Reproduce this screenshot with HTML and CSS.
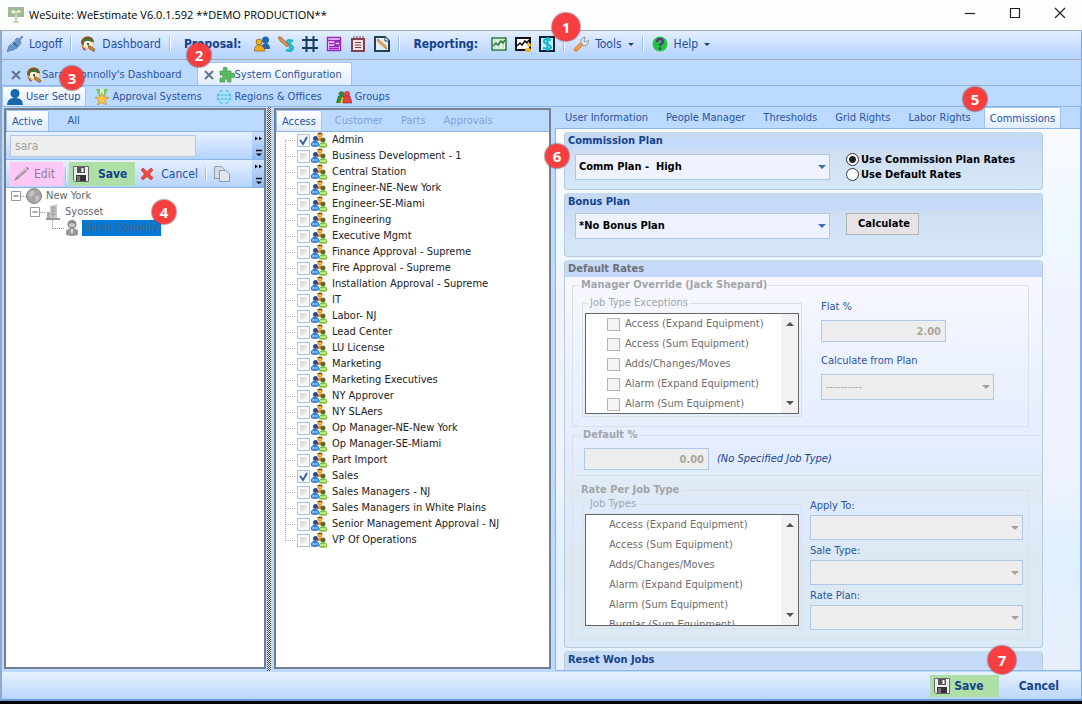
FILE: index.html
```html
<!DOCTYPE html>
<html lang="en">
<head>
  <meta charset="UTF-8">
  <title>WeSuite: WeEstimate V6.0.1.592</title>
  <link rel="stylesheet" href="styles.css">
</head>
<body>

<svg class="sprite" aria-hidden="true">
  <symbol id="people" viewBox="0 0 16 16">
    <circle cx="9" cy="3" r="2.6" fill="#f0a03c"/><path d="M6.3 2.6C6.5 0 11.500 0 11.700 2.600L9 1.600z" fill="#3b2b1d"/>
    <path d="M6 9V7q3-3 6 0v2z" fill="#f08a1c"/>
    <circle cx="4.500" cy="6.500" r="2.500" fill="#2b4f8c"/><path d="M0 14v-3q4-4.500 8 0v3q-4 2-8 0z" fill="#2f7fd0"/><path d="M1 12h6" stroke="#8cc4f4" stroke-width="1.500"/>
    <circle cx="12" cy="8" r="2.500" fill="#55702a"/><path d="M8 15v-3q4-4 8 0v3q-4 2-8 0z" fill="#86c440"/><path d="M9 13h6" stroke="#d3f09a" stroke-width="1.500"/>
  </symbol>
  <symbol id="floppy" viewBox="0 0 16 16">
    <path d="M.5.5h15v15H2L.5 14z" fill="#eee" stroke="#666"/><path d="M4 1h8v6H4z" fill="#555"/><path d="M8.500 2h2v4h-2z" fill="#fff"/>
    <path d="M3 9h10v6H3z" fill="#333"/><path d="M4 10h3v5H4z" fill="#777"/>
  </symbol>
  <symbol id="dash" viewBox="0 0 16 16">
    <circle cx="7.500" cy="7" r="6.500" fill="#e9c27a"/><path d="M1 7C1 2 5 .5 8 .5s6 2 6 6l-3-1.500-6 0-2 5z" fill="#8a5420"/>
    <path d="M4 6q4-3 9 1l-1 4-5 1-3-2z" fill="#fff1d6"/><path d="M4 4q4-4 9 1l-1 1.500Q8 3 4 6z" fill="#2d7a3f"/>
    <circle cx="8" cy="8" r="1" fill="#222"/><path d="M8 9.500l3 1 4 3-1 2-5-3z" fill="#c98c3c" stroke="#6d4416" stroke-width=".7"/><path d="M1 9l5 5-2 .5z" fill="#a33"/>
  </symbol>
  <symbol id="sheet" viewBox="0 0 16 16">
    <path d="M1 1h10l4 4v10H1z" fill="#dfeef8" stroke="#24404e" stroke-width="2"/><path d="M11 1v4h4" fill="#fff" stroke="#24404e"/>
  </symbol>
  <symbol id="expander" viewBox="0 0 10 10"><path d="M.5.500h9v9h-9z" fill="#fff" stroke="#999"/><path d="M2.500 5h5" stroke="#555"/></symbol>
  <symbol id="overflow" viewBox="0 0 12 26">
    <path d="M3 4l3 2-3 2zM7 4l3 2-3 2z" fill="#111"/><path d="M4 18h6" stroke="#111" stroke-width="1.500"/><path d="M4 21h6l-3 3z" fill="#111"/><path d="M5 25l3-2" stroke="#fff" stroke-width=".5"/>
  </symbol>
</svg>

<header class="titlebar">
  <svg class="icon" viewBox="0 0 16 16"><path d="M0 0h16v10H0z" fill="#a3b894"/><path d="M3 5q2-4 5 0 3-4 5 0-3 2-5 0-3 3-5 0z" fill="#edf3da"/><path d="M8 4v12M5 15.500h6" stroke="#c5cfb4" stroke-width="2"/></svg>
  <h1>WeSuite: WeEstimate V6.0.1.592 **DEMO PRODUCTION**</h1>
  <div class="window-buttons">
    <button type="button" aria-label="Minimize"><svg viewBox="0 0 12 12"><path d="M1 6.500h10"/></svg></button>
    <button type="button" aria-label="Maximize"><svg viewBox="0 0 12 12"><path d="M1.500 1.500h9v9h-9z"/></svg></button>
    <button type="button" aria-label="Close"><svg viewBox="0 0 12 12"><path d="M1 1l10 10M11 1L1 11"/></svg></button>
  </div>
</header>

<div class="window">
  <nav class="toolbar">
    <button type="button" class="tool"><svg class="icon" viewBox="0 0 16 16"><path d="M0 16l2-6 4-4 4-4 2 1 3-3 1 1-3 3 1 3-4 5-4 2-4 1z" fill="#6b97cc" stroke="#3c6aa5" stroke-width=".6"/><path d="M6 6l4 4" stroke="#24538f" stroke-width="1.200"/><path d="M4 9l4-5" stroke="#bcd6f2"/></svg>Logoff</button>
    <span class="sep"></span>
    <button type="button" class="tool"><svg class="icon"><use href="#dash"/></svg>Dashboard</button>
    <span class="sep"></span>
    <strong class="tool-title">Proposal:</strong>
    <div class="tool-icons">
      <button type="button" aria-label="Customers"><svg class="icon" viewBox="0 0 16 16"><circle cx="11.500" cy="4" r="3.500" fill="#2a66ad"/><path d="M7 13c0-7 9-8 9 0z" fill="#2a66ad"/><circle cx="5" cy="6" r="3" fill="#f2ac16" stroke="#6d5013" stroke-width=".6"/><path d="M0 15q.5-6 5-6t6 6z" fill="#f2ac16" stroke="#6d5013" stroke-width=".6"/></svg></button>
      <button type="button" aria-label="Pricing"><svg class="icon" viewBox="0 0 16 16"><path d="M15 5q-6-2-6 1 0 2 3 3t3 3q-1 4-7 2M12 3v13" fill="none" stroke="#26b9c6" stroke-width="2.500"/><path d="M0 1l3 0 8 8-2 2-7-6z" fill="#d78a52" stroke="#98552d" stroke-width=".6"/></svg></button>
      <button type="button" aria-label="Grid"><svg class="icon" viewBox="0 0 16 16"><path d="M4.500 0v16M11.500 0v16M0 4h16M0 12h16" stroke="#173c5c" stroke-width="2"/></svg></button>
      <button type="button" aria-label="Form"><svg class="icon" viewBox="0 0 16 16"><path d="M1.500 1.500h13v13h-13zM1.500 4.500h13M3 7.500h5M3 10.500h10M3 12.500h10M9 6h5v3H9z" fill="#f1d9fa" stroke="#9a27bd" stroke-width="1.400"/></svg></button>
      <button type="button" aria-label="Notes"><svg class="icon" viewBox="0 0 16 16"><path d="M2 3h12v12H2z" fill="#f6dfe4" stroke="#83424f" stroke-width="2"/><path d="M4 0v4M7 0v4M10 0v4M13 0v4" stroke="#83424f"/><path d="M5 6.500h6M5 9h6M5 11.500h6" stroke="#83424f"/></svg></button>
      <button type="button" aria-label="Edit document"><svg class="icon" viewBox="0 0 16 16"><use href="#sheet"/><path d="M3 5l8 7 2 1-1-3-8-7z" fill="#f0a64c" stroke="#965d20" stroke-width=".5"/></svg></button>
    </div>
    <span class="sep"></span>
    <strong class="tool-title">Reporting:</strong>
    <div class="tool-icons">
      <button type="button" aria-label="Chart"><svg class="icon" viewBox="0 0 16 16"><path d="M1 2h14v12H1z" fill="#e3f6e4" stroke="#2b7a41" stroke-width="1.500"/><path d="M4 2v12M8 2v12M12 2v12" fill="none" stroke="#9ccba4" stroke-width=".8"/><path d="M2 10l3-3 2 2 3-4 2 2 2-3" fill="none" stroke="#2b7a41" stroke-width="1.500"/></svg></button>
      <button type="button" aria-label="Sales chart"><svg class="icon" viewBox="0 0 16 16"><path d="M1 2h14v12H1z" fill="#fff" stroke="#111" stroke-width="2"/><path d="M2 10l3-3 2 2 3-4 2 2 2-3" fill="none" stroke="#111" stroke-width="1.500"/><circle cx="14" cy="9" r="2" fill="#f3b527"/><ellipse cx="13" cy="14" rx="3" ry="2" fill="#f3b527"/></svg></button>
      <button type="button" aria-label="Commission report"><svg class="icon" viewBox="0 0 16 16"><path d="M0 0h16v16H0z" fill="#123"/><path d="M2 2h12v12H2z" fill="#bdf4fb"/><path d="M12 4q-7-2-7 1 0 2 3 3t4 3q0 3-8 1M8.500 1v14" fill="none" stroke="#14b4cf" stroke-width="2"/></svg></button>
    </div>
    <span class="sep"></span>
    <button type="button" class="tool"><svg class="icon" viewBox="0 0 16 16"><path d="M1 13l6-6 3 2-6 6q-3 1-3-2z" fill="#f39a45" stroke="#c56a20" stroke-width=".6"/><path d="M8 7q-1-5 4-6l-1 4 2 1 3-2q0 5-5 6z" fill="#dfe4ea" stroke="#7d8791" stroke-width=".8"/></svg>Tools<span class="caret"></span></button>
    <span class="sep"></span>
    <button type="button" class="tool"><svg class="icon" viewBox="0 0 16 16"><circle cx="8" cy="8" r="7.500" fill="#20c63a"/><path d="M5 6q0-3 3-3t3 3q0 1-2 2-1 1-1 2" fill="none" stroke="#74239c" stroke-width="2.200"/><circle cx="8" cy="12.500" r="1.300" fill="#74239c"/></svg>Help<span class="caret"></span></button>
  </nav>

  <nav class="tabs doc-tabs">
    <a href="#dashboard"><svg class="close" viewBox="0 0 10 10"><path d="M1 1l8 8M9 1L1 9"/></svg><svg class="icon"><use href="#dash"/></svg>Sarah Connolly's Dashboard</a>
    <a href="#config" class="active"><svg class="close" viewBox="0 0 10 10"><path d="M1 1l8 8M9 1L1 9"/></svg><svg class="icon" viewBox="0 0 16 16"><path d="M1 4h4q-2-4 1-4t2 4h4v3q4-2 4 1.500T12 10v5H8.500q1-3-1.500-3t-1 3H1v-4q3 1 3-1.500T1 8z" fill="#5cba5c" stroke="#3c9446" stroke-width=".7"/></svg>System Configuration</a>
  </nav>

  <nav class="tabs sub-tabs">
    <a href="#users" class="active"><svg class="icon" viewBox="0 0 16 16"><circle cx="8" cy="4.500" r="4.500" fill="#1667ad"/><path d="M0 16q0-6 6-7h4q6 1 6 7z" fill="#1667ad"/></svg>User Setup</a>
    <a href="#approvals"><svg class="icon" viewBox="0 0 16 16"><path d="M2 0h12l-3 7H5z" fill="#7cc46a"/><path d="M6 0h4v6H6z" fill="#d9efc8"/><path d="M8 4l2 4 5 .5-4 3 1.500 4.500L8 13.500 3.500 16 5 11.500l-4-3L6 8z" fill="#f9c64a" stroke="#c98a1c" stroke-width=".7"/></svg>Approval Systems</a>
    <a href="#regions"><svg class="icon" viewBox="0 0 16 16"><circle cx="8" cy="8" r="7.500" fill="#5fc3ea"/><path d="M8 0v16M1 8h14M2 4h12M2 12h12M8 .5q-8 7.500 0 15 8-7.500 0-15z" fill="none" stroke="#d8f3fd" stroke-width=".9"/></svg>Regions &amp; Offices</a>
    <a href="#groups"><svg class="icon" viewBox="0 0 16 16"><circle cx="5.500" cy="5" r="2.800" fill="#2d8a3c"/><path d="M0 14l2-7h6l1 7z" fill="#2d8a3c"/><path d="M4 14l2-6h3v6z" fill="#f0c02c"/><circle cx="11" cy="5" r="3" fill="#dc4545"/><path d="M7 14l1-7h6l2 7z" fill="#dc4545" stroke="#8e2525" stroke-width=".6"/></svg>Groups</a>
  </nav>

  <main class="panels">
    <section class="panel users">
      <nav class="tabs"><a href="#active" class="active">Active</a><a href="#all">All</a></nav>
      <div class="bar">
        <input type="text" class="search" aria-label="Search users" value="sara" disabled>
        <svg class="overflow"><use href="#overflow"/></svg>
      </div>
      <div class="bar">
        <button type="button" class="act edit" disabled><svg class="icon" viewBox="0 0 16 16"><path d="M0 15l2-4 9-8 2 2-9 8z" fill="#9b8f9b"/><path d="M12 2l1-1 2 2-1 1z" fill="#7d747d"/><path d="M4 11l7-7" stroke="#cfc3cf"/></svg>Edit</button>
        <span class="sep"></span>
        <button type="button" class="act save"><svg class="icon"><use href="#floppy"/></svg>Save</button>
        <button type="button" class="act"><svg class="cross" viewBox="0 0 14 14"><path d="M1 3l2-2 4 3.500L11 1l2 2-3.500 4L13 11l-2 2-4-3.500L3 13l-2-2 3.500-4z" fill="#ee4b40" stroke="#c32d25" stroke-width=".6"/></svg>Cancel</button>
        <span class="sep"></span>
        <button type="button" class="act" aria-label="Copy"><svg class="icon" viewBox="0 0 16 16"><path d="M.5.500h7l3 3v9H.5z" fill="#d3dbe4" stroke="#8e9baa"/><path d="M5.500 4.500h6l4 3v8h-10z" fill="#dfe5ec" stroke="#8e9baa"/></svg></button>
        <svg class="overflow"><use href="#overflow"/></svg>
      </div>
      <ul class="tree">
        <li><svg class="expander"><use href="#expander"/></svg><i class="dots"></i><svg class="icon" viewBox="0 0 16 16"><circle cx="8" cy="8" r="7.500" fill="#a5a5a5" stroke="#888"/><path d="M3 5q4-4 6-1l-2 4-3 1zM9 9l4-2v4l-3 3z" fill="#c4c4c4"/></svg><span>New York</span></li>
        <li class="level-2"><svg class="expander"><use href="#expander"/></svg><i class="dots"></i><svg class="icon" viewBox="0 0 16 16"><path d="M5 2l7-2v14H5z" fill="#c9c9c9"/><path d="M6 4h5M6 7h5M6 10h5M8 2v12" stroke="#999"/><path d="M1 14h14v2H1z" fill="#999"/><path d="M2 8h3v6H2z" fill="#aaa"/></svg><span>Syosset</span></li>
        <li class="level-3"><i class="dots elbow"></i><svg class="icon" viewBox="0 0 16 16"><circle cx="8" cy="4.500" r="4.500" fill="#888"/><path d="M5 4q3-2 6 0v3H5z" fill="#c4c4c4"/><path d="M2 15V10q6-3 12 0v5q-6 2-12 0z" fill="#999"/><path d="M7 9h2v4H7z" fill="#e0e0e0"/></svg><span class="selected">Sarah Connolly</span></li>
      </ul>
    </section>

    <div class="splitter"></div>

    <section class="panel access">
      <nav class="tabs"><a href="#access" class="active">Access</a><a class="off">Customer</a><a class="off">Parts</a><a class="off">Approvals</a></nav>
      <ul class="checks">
        <li><label><input type="checkbox" checked><svg class="icon"><use href="#people"/></svg>Admin</label></li>
        <li><label><input type="checkbox"><svg class="icon"><use href="#people"/></svg>Business Development - 1</label></li>
        <li><label><input type="checkbox"><svg class="icon"><use href="#people"/></svg>Central Station</label></li>
        <li><label><input type="checkbox"><svg class="icon"><use href="#people"/></svg>Engineer-NE-New York</label></li>
        <li><label><input type="checkbox"><svg class="icon"><use href="#people"/></svg>Engineer-SE-Miami</label></li>
        <li><label><input type="checkbox"><svg class="icon"><use href="#people"/></svg>Engineering</label></li>
        <li><label><input type="checkbox"><svg class="icon"><use href="#people"/></svg>Executive Mgmt</label></li>
        <li><label><input type="checkbox"><svg class="icon"><use href="#people"/></svg>Finance Approval - Supreme</label></li>
        <li><label><input type="checkbox"><svg class="icon"><use href="#people"/></svg>Fire Approval - Supreme</label></li>
        <li><label><input type="checkbox"><svg class="icon"><use href="#people"/></svg>Installation Approval - Supreme</label></li>
        <li><label><input type="checkbox"><svg class="icon"><use href="#people"/></svg>IT</label></li>
        <li><label><input type="checkbox"><svg class="icon"><use href="#people"/></svg>Labor- NJ</label></li>
        <li><label><input type="checkbox"><svg class="icon"><use href="#people"/></svg>Lead Center</label></li>
        <li><label><input type="checkbox"><svg class="icon"><use href="#people"/></svg>LU License</label></li>
        <li><label><input type="checkbox"><svg class="icon"><use href="#people"/></svg>Marketing</label></li>
        <li><label><input type="checkbox"><svg class="icon"><use href="#people"/></svg>Marketing Executives</label></li>
        <li><label><input type="checkbox"><svg class="icon"><use href="#people"/></svg>NY Approver</label></li>
        <li><label><input type="checkbox"><svg class="icon"><use href="#people"/></svg>NY SLAers</label></li>
        <li><label><input type="checkbox"><svg class="icon"><use href="#people"/></svg>Op Manager-NE-New York</label></li>
        <li><label><input type="checkbox"><svg class="icon"><use href="#people"/></svg>Op Manager-SE-Miami</label></li>
        <li><label><input type="checkbox"><svg class="icon"><use href="#people"/></svg>Part Import</label></li>
        <li><label><input type="checkbox" checked><svg class="icon"><use href="#people"/></svg>Sales</label></li>
        <li><label><input type="checkbox"><svg class="icon"><use href="#people"/></svg>Sales Managers - NJ</label></li>
        <li><label><input type="checkbox"><svg class="icon"><use href="#people"/></svg>Sales Managers in White Plains</label></li>
        <li><label><input type="checkbox"><svg class="icon"><use href="#people"/></svg>Senior Management Approval - NJ</label></li>
        <li><label><input type="checkbox"><svg class="icon"><use href="#people"/></svg>VP Of Operations</label></li>
      </ul>
    </section>

    <section class="details">
      <nav class="tabs"><a href="#info">User Information</a><a href="#people-manager">People Manager</a><a href="#thresholds">Thresholds</a><a href="#grid">Grid Rights</a><a href="#labor">Labor Rights</a><a href="#commissions" class="active">Commissions</a></nav>
      <div class="content">
        <section class="group plan">
          <h2>Commission Plan</h2>
          <div class="group-row">
            <select class="wide" aria-label="Commission Plan"><option>Comm Plan -&nbsp; High</option></select>
            <div class="radios">
              <label><input type="radio" name="rates" checked>Use Commission Plan Rates</label>
              <label><input type="radio" name="rates">Use Default Rates</label>
            </div>
          </div>
        </section>

        <section class="group bonus">
          <h2>Bonus Plan</h2>
          <div class="group-row">
            <select class="wide" aria-label="Bonus Plan"><option>*No Bonus Plan</option></select>
            <button type="button" class="calculate">Calculate</button>
          </div>
        </section>

        <section class="group rates">
          <h2>Default Rates</h2>
          <fieldset class="box">
            <legend>Manager Override (Jack Shepard)</legend>
            <div class="columns">
              <fieldset class="inner">
                <legend>Job Type Exceptions</legend>
                <div class="listbox">
                  <ul>
                    <li><label><input type="checkbox" disabled>Access (Expand Equipment)</label></li>
                    <li><label><input type="checkbox" disabled>Access (Sum Equipment)</label></li>
                    <li><label><input type="checkbox" disabled>Adds/Changes/Moves</label></li>
                    <li><label><input type="checkbox" disabled>Alarm (Expand Equipment)</label></li>
                    <li><label><input type="checkbox" disabled>Alarm (Sum Equipment)</label></li>
                  </ul>
                  <div class="scroll"><span class="up"></span><span class="down"></span></div>
                </div>
              </fieldset>
              <div class="override">
                <label for="flat">Flat %</label>
                <input type="text" id="flat" class="number" value="2.00" disabled>
                <label for="from-plan">Calculate from Plan</label>
                <select id="from-plan" disabled><option>----------</option></select>
              </div>
            </div>
          </fieldset>

          <fieldset class="box default">
            <legend>Default %</legend>
            <div class="columns">
              <input type="text" class="number" aria-label="Default %" value="0.00" disabled>
              <em>(No Specified Job Type)</em>
            </div>
          </fieldset>

          <fieldset class="box per-job">
            <legend>Rate Per Job Type</legend>
            <div class="columns">
              <fieldset class="inner">
                <legend>Job Types</legend>
                <div class="listbox plain">
                  <ul>
                    <li>Access (Expand Equipment)</li>
                    <li>Access (Sum Equipment)</li>
                    <li>Adds/Changes/Moves</li>
                    <li>Alarm (Expand Equipment)</li>
                    <li>Alarm (Sum Equipment)</li>
                    <li>Burglar (Sum Equipment)</li>
                  </ul>
                  <div class="scroll"><span class="up"></span><span class="down"></span></div>
                </div>
              </fieldset>
              <div class="fields">
                <label for="apply">Apply To:</label>
                <select id="apply" disabled><option></option></select>
                <label for="sale">Sale Type:</label>
                <select id="sale" disabled><option></option></select>
                <label for="rate">Rate Plan:</label>
                <select id="rate" disabled><option></option></select>
              </div>
            </div>
          </fieldset>
        </section>

        <section class="group reset">
          <h2>Reset Won Jobs</h2>
        </section>
      </div>
    </section>
  </main>

  <footer class="statusbar">
    <button type="button" class="act save"><svg class="icon"><use href="#floppy"/></svg>Save</button>
    <button type="button" class="act">Cancel</button>
  </footer>
</div>

<span class="step step-1">1</span>
<span class="step step-2">2</span>
<span class="step step-3">3</span>
<span class="step step-4">4</span>
<span class="step step-5">5</span>
<span class="step step-6">6</span>
<span class="step step-7">7</span>

</body>
</html>
```
FILE: styles.css
```css
* {
  box-sizing: border-box;
}
body {
  margin: 0;
  height: 100vh;
  padding-bottom: 3px;
  display: flex;
  flex-direction: column;
  position: relative;
  overflow: hidden;
  background: #000;
  color: #222;
  font: 11px/14px "DejaVu Sans Condensed", "Noto Sans", sans-serif;
}
ul {
  list-style: none;
  margin: 0;
  padding: 0;
}
a {
  color: inherit;
  text-decoration: none;
}
button {
  background: none;
  border: 0;
  padding: 0;
  font: inherit;
  color: inherit;
}
input, select {
  font: inherit;
  margin: 0;
}
.sprite {
  position: absolute;
  width: 0;
  height: 0;
}
.icon {
  width: 16px;
  height: 16px;
  flex: none;
  display: block;
}

/* title bar */
.titlebar {
  flex: none;
  height: 30px;
  padding-left: 8px;
  display: flex;
  align-items: center;
  gap: 5px;
  background: #fdfefe;
}
.titlebar h1 {
  flex: 1;
  margin: 0;
  font: 11px/16px "Open Sans", sans-serif;
  color: #000;
}
.window-buttons {
  display: flex;
}
.window-buttons button {
  width: 45px;
  height: 28px;
}
.window-buttons svg {
  width: 12px;
  height: 12px;
  fill: none;
  stroke: #222;
  stroke-width: 1.2;
}

.window {
  flex: 1;
  min-height: 0;
  display: flex;
  flex-direction: column;
  background: #bcdaff;
  border-left: 2px solid #8fa9cc;
  border-right: 1px solid #7fa8e0;
  border-bottom: 2px solid #6a9ad6;
}

/* toolbar */
.toolbar {
  flex: none;
  height: 30px;
  padding: 0 0 2px 5px;
  display: flex;
  align-items: center;
  background: linear-gradient(#e3efff, #c6dcff 60%, #b3d5ff);
  border-top: 1px solid #a8a8b0;
  border-bottom: 1px solid #a8a8b0;
  color: #1f4fa0;
  font-size: 12px;
}
.tool {
  display: flex;
  align-items: center;
  gap: 6px;
}
.tool-title {
  color: #15428b;
  margin: 0 13px 0 5px;
}
.tool-icons {
  display: flex;
  gap: 8px;
}
.sep {
  width: 2px;
  height: 14px;
  margin: 0 8px;
  background: linear-gradient(to right, #9abfee 50%, #fff 50%);
}
.caret {
  border: 3px solid transparent;
  border-top-color: #15428b;
  border-bottom: 0;
}

/* tabs */
.tabs {
  flex: none;
  display: flex;
  align-items: flex-end;
  color: #2a54a0;
  background: #bcdaff;
  border-bottom: 1px solid #8db5ec;
}
.tabs a {
  display: flex;
  align-items: center;
  height: 21px;
  padding: 1px 5px 0;
}
.tabs .active {
  background: linear-gradient(#fff, #dfecff);
  border: 1px solid #9dc3f5;
  border-bottom: 0;
  border-radius: 2px 2px 0 0;
}
.tabs .off {
  color: #84a0d4;
}
.doc-tabs {
  height: 26px;
}
.doc-tabs a {
  height: 23px;
  padding: 3px 9px 0;
}
.doc-tabs .active {
  padding: 2px 9px 0 6px;
  margin-left: 6px;
}
.close {
  width: 10px;
  height: 10px;
  margin-right: 5px;
  stroke: #66748c;
  stroke-width: 2;
}
.sub-tabs {
  height: 21px;
}
.sub-tabs a {
  height: 20px;
  gap: 3px;
  padding: 2px 6px 0 8px;
}
.sub-tabs .active {
  padding: 1px 4px 0;
}

/* panels */
.panels {
  flex: 1;
  min-height: 0;
  display: grid;
  grid-template-columns: 264px 6px 279px minmax(0, 1fr);
  padding-bottom: 1px;
}
.panel {
  display: flex;
  flex-direction: column;
  margin: 1px 0 2px 2px;
  border: 2px solid #74808f;
  background: #fff;
}
.panel .tabs {
  height: 22px;
}
.users .tabs a + a {
  margin-left: 14px;
}
.splitter {
  margin: 0 1px;
  background: #fff repeating-conic-gradient(#444 0 25%, #fff 0 50%) 0 0 / 2px 2px;
}
.bar {
  flex: none;
  height: 28px;
  display: flex;
  align-items: center;
  padding-left: 4px;
  background: linear-gradient(#e6f1ff, #c9dfff 60%, #b5d5fd);
  border-bottom: 1px solid #8db5ec;
  color: #1f4fa0;
  font-size: 12px;
}
.bar .sep {
  margin: 0 2px;
}
.search {
  width: 186px;
  height: 22px;
  padding: 0 4px;
  border: 1px solid #b4cbe6;
  background: #ebedee;
  color: #a3a294;
}
.overflow {
  width: 12px;
  height: 27px;
  margin-left: auto;
  background: linear-gradient(#cfe2ff, #8fb8ee);
}
.act {
  display: flex;
  align-items: center;
  gap: 4px;
  height: 24px;
  padding: 0 5px;
}
.edit {
  background: #fcc8f6;
  color: #8a7d92;
  padding: 0 8px 0 4px;
}
.save {
  background: #addfa6;
  color: #15428b;
  font-weight: bold;
}
.bar .save {
  gap: 9px;
  padding: 0 8px 0 4px;
}
.cross {
  width: 14px;
  height: 14px;
  margin-right: 3px;
}
.tree {
  color: #666;
}
.tree li {
  display: flex;
  align-items: center;
  height: 16px;
  padding-left: 5px;
}
.tree .level-2 {
  padding-left: 24px;
}
.tree .level-3 {
  padding-left: 46px;
}
.tree span {
  margin-left: 2px;
  padding: 1px 2px;
}
.tree .selected {
  background: #0078d7;
  color: #5c6470;
}
.expander {
  width: 10px;
  height: 10px;
}
.dots {
  width: 5px;
  border-top: 1px dotted #999;
}
.elbow {
  width: 12px;
  height: 9px;
  align-self: flex-start;
  border-top: 0;
  border-left: 1px dotted #999;
  border-bottom: 1px dotted #999;
}

/* access list */
.access .tabs .off {
  margin-left: 8px;
}
.checks li {
  height: 16px;
  padding-left: 21px;
  background: repeating-linear-gradient(to right, #aaa 0 1px, transparent 1px 2px) 10px 8px / 9px 1px no-repeat, repeating-linear-gradient(#aaa 0 1px, transparent 1px 2px) 9px 0 / 1px 16px no-repeat;
}
.checks li:first-child {
  background-position: 10px 8px, 9px 8px;
}
.checks li:last-child {
  background-size: 9px 1px, 1px 9px;
}
.checks label {
  display: flex;
  align-items: center;
  height: 16px;
}
.checks .icon {
  margin: 0 5px 0 1px;
}
input[type="checkbox"] {
  appearance: none;
  width: 13px;
  height: 13px;
  border: 1px solid #a9c2de;
  background: linear-gradient(135deg, #c8cdd6, #fff) content-box;
  padding: 2px;
}
input[type="checkbox"]:checked {
  background: #f3f7fc url("data:image/svg+xml,%3Csvg xmlns='http://www.w3.org/2000/svg' viewBox='0 0 11 11'%3E%3Cpath d='M2 5l3 4 4-7' fill='none' stroke='%23395f9c' stroke-width='2'/%3E%3C/svg%3E");
}

/* details */
.details {
  display: flex;
  flex-direction: column;
  min-width: 0;
  min-height: 0;
  margin-left: 4px;
  border-right: 1px solid #8db5ec;
}
.details .tabs {
  height: 22px;
  gap: 8px;
  padding-left: 5px;
}
.content {
  flex: 1;
  min-height: 0;
  overflow: hidden;
  padding: 3px 36px 0 8px;
  border-left: 1px solid #8db5ec;
  border-bottom: 1px solid #8db5ec;
  background: linear-gradient(#f8faff, #eef8ff 20%, #f0f3ff 30%, #eef2ff 65%, #e0f1ff 78%, #e8effc);
}
.group {
  width: 100%;
  max-width: 479px;
  margin-bottom: 3px;
  border: 1px solid #b5cbe0;
  border-top: 0;
  border-radius: 4px;
  background: linear-gradient(#cbd9ec, #d0e1f6 50%, #d6e8f6);
}
.group h2 {
  margin: 0;
  height: 17px;
  padding-left: 3px;
  font-size: 11px;
  line-height: 17px;
  color: #15428b;
  background: linear-gradient(#c3dbee, #c5dafa 50%);
  border-radius: 4px 4px 0 0;
}
.group-row {
  display: flex;
  padding-left: 10px;
  gap: 16px;
  font-weight: bold;
  color: #000;
}
.plan {
  height: 58px;
}
.plan .group-row {
  align-items: center;
  padding-top: 3px;
}
.bonus {
  height: 64px;
}
.bonus .group-row {
  padding-top: 3px;
}
select {
  appearance: none;
  height: 26px;
  padding: 0 4px;
  border: 1px solid #b0c8e4;
  border-radius: 0;
  background: #eef2ff url("data:image/svg+xml,%3Csvg xmlns='http://www.w3.org/2000/svg' width='8' height='4'%3E%3Cpath d='M0 0h8L4 4z' fill='%23416faf'/%3E%3C/svg%3E") right 3px center no-repeat;
  color: #000;
}
select:disabled {
  opacity: 1;
  background: #ededed url("data:image/svg+xml,%3Csvg xmlns='http://www.w3.org/2000/svg' width='8' height='4'%3E%3Cpath d='M0 0h8L4 4z' fill='%23a5a295'/%3E%3C/svg%3E") right 3px center no-repeat;
  color: #aca899;
}
.wide {
  width: 255px;
}
.wide, .calculate {
  padding-left: 3px;
}
.radios label {
  display: flex;
  align-items: center;
  gap: 2px;
  height: 15px;
}
input[type="radio"] {
  appearance: none;
  width: 13px;
  height: 13px;
  border: 1px solid #333;
  border-radius: 50%;
  background: #fff;
}
input[type="radio"]:checked {
  background: radial-gradient(#222 0 3px, #fff 4px);
}
.calculate {
  width: 73px;
  height: 22px;
  background: #e6e3e8;
  border: 1px solid #b3b3b3;
}
.rates {
  height: 388px;
  background: linear-gradient(#fafaff, #edf2ff 25%, #e3edff 50%, #dfeaf4 60%, #dfeaff 66%, #dce9f5 75%, #dceaf6);
}
.rates h2 {
  color: #6c7078;
}
.box, .inner {
  min-width: 0;
  margin: 0;
  border: 1px solid #dde0e3;
}
.box {
  margin: 1px 13px 1px 7px;
  padding: 0 9px;
}
legend {
  padding: 0 2px;
  line-height: 14px;
  color: #a3a5a9;
}
.box > legend {
  margin-left: -3px;
  font-weight: bold;
}
.columns {
  display: flex;
}
.inner {
  flex: none;
  width: 220px;
  padding: 3px 2px 2px;
}
.inner legend {
  margin-left: 3px;
}
.box .inner {
  margin-bottom: 9px;
}
.box:first-of-type .inner {
  margin-top: 4px;
}
.listbox {
  height: 101px;
  display: flex;
  justify-content: space-between;
  overflow: hidden;
  border: 1px solid #646464;
  background: #fff;
  color: #6d6d6d;
}
.listbox.plain {
  height: 112px;
}
.listbox li {
  height: 20px;
  padding-left: 21px;
  line-height: 20px;
}
.plain li {
  padding-left: 23px;
}
.listbox label {
  display: flex;
  align-items: center;
  gap: 5px;
}
.listbox input {
  border-color: #b5b5b5;
  background: #f6f4f6;
}
.scroll {
  width: 17px;
  padding: 8px 5px;
  display: flex;
  flex-direction: column;
  justify-content: space-between;
  background: #f3f1f4;
}
.up, .down {
  border: 4px solid transparent;
}
.up {
  border-top: 0;
  border-bottom-color: #555;
}
.down {
  border-bottom: 0;
  border-top-color: #555;
}
.override, .fields {
  display: flex;
  flex-direction: column;
  color: #2a54a0;
}
.override {
  padding: 8px 0 0 19px;
  width: 192px;
}
.number {
  width: 125px;
  height: 22px;
  padding: 0 4px;
  text-align: right;
  font-weight: bold;
  border: 1px solid #b0c8e4;
  background: #ededed;
  color: #aca899;
}
.override .number {
  margin: 6px 0 12px;
}
.override select {
  margin-top: 6px;
}
.default {
  margin-right: 0;
  padding: 6px 11px 5px;
  border-right: 0;
}
.default .columns {
  align-items: center;
  gap: 8px;
}
.default em {
  color: #15428b;
}
.per-job {
  margin-top: 7px;
}
.fields {
  flex: 1;
  padding: 2px 0 0 8px;
  margin-right: -4px;
}
.fields select {
  margin: 2px 0 4px;
  height: 25px;
}
.reset {
  height: 40px;
}

/* bottom bar */
.statusbar {
  flex: none;
  height: 27px;
  display: flex;
  align-items: center;
  justify-content: flex-end;
  gap: 15px;
  padding-right: 17px;
  background: linear-gradient(#e6f1ff, #b9d7fc);
  color: #15428b;
  font-size: 12px;
  font-weight: bold;
}
.statusbar .save {
  height: 22px;
  padding: 0 15px 0 4px;
}

/* numbered steps laid over the window */
.step {
  position: absolute;
  width: 24px;
  height: 24px;
  border-radius: 50%;
  background: #f93e40;
  box-shadow: 0 0 1px 1px rgba(110, 60, 70, 0.5);
  color: #fff;
  font: bold 15px/24px "Open Sans", sans-serif;
  text-align: center;
}
.step-1 { left: 552px; top: 13px; width: 28px; height: 28px; line-height: 28px; }
.step-2 { left: 187px; top: 43px; }
.step-3 { left: 60px; top: 66px; }
.step-4 { left: 152px; top: 200px; }
.step-5 { right: 95px; top: 87px; }
.step-6 { left: 545px; top: 144px; }
.step-7 { right: 66px; bottom: 30px; width: 28px; height: 28px; line-height: 28px; }
```
